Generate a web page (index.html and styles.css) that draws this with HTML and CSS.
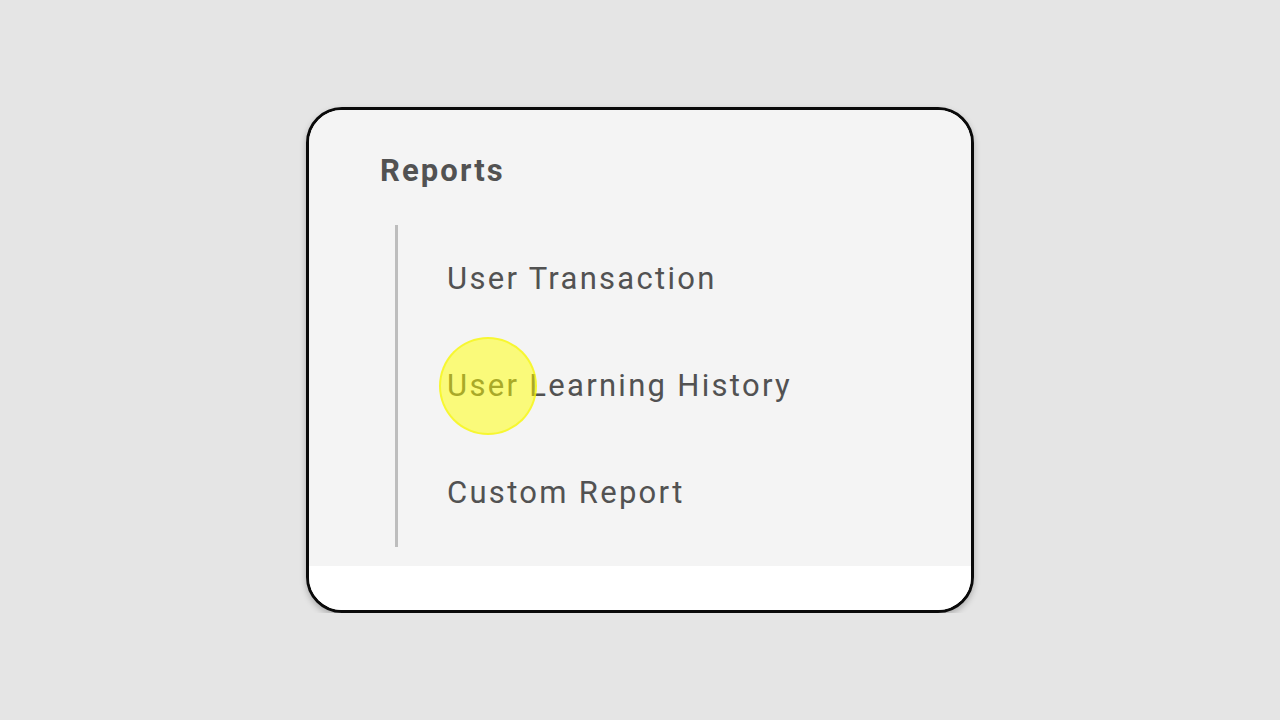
FILE: index.html
```html
<!DOCTYPE html>
<html lang="en">
<head>
    <meta charset="UTF-8">
    <meta name="viewport" content="width=device-width, initial-scale=1.0">
    <title>Reports</title>
    <link rel="stylesheet" href="styles.css">
</head>
<body>

    <div class="card">
        <section class="panel">
            <h2 class="title">Reports</h2>
            <ul class="menu">
                <li><a href="#transaction">User Transaction</a></li>
                <li class="clicked"><a href="#learning">User Learning History</a><span class="spot"></span></li>
                <li><a href="#custom">Custom Report</a></li>
            </ul>
        </section>
        <div class="foot"></div>
    </div>

</body>
</html>
```
FILE: styles.css
```css
body { margin: 0; background: #e5e5e5; font-family: Roboto, "Liberation Sans", sans-serif; }
.card { box-sizing: border-box; width: 668px; height: 506px; margin: 107px auto 0; border: 3px solid #0a0a0a; border-radius: 36px; overflow: hidden; background: white; box-shadow: 0 3px 6px rgba(0, 0, 0, 0.25); display: flex; flex-direction: column; }
.panel { background: #f4f4f4; height: 456px; padding: 37px 0 0 71px; box-sizing: border-box; }
.title { margin: 0; font-size: 31px; font-weight: bold; color: #525252; letter-spacing: 2.1px; line-height: 48px; }
.menu { list-style: none; margin: 30px 0 0 15px; padding: 33px 0 0 0; border-left: 3px solid #bdbdbd; height: 322px; box-sizing: border-box; display: flex; flex-direction: column; gap: 66px; }
.menu li { position: relative; padding-left: 49px; font-size: 31px; line-height: 41px; }
.menu a { text-decoration: none; color: #525252; letter-spacing: 2.3px; }
.spot { position: absolute; left: 41px; top: -28px; width: 98px; height: 98px; border-radius: 50%; background: rgba(255, 255, 0, 0.5); border: 2px solid rgba(245, 245, 0, 0.6); box-sizing: border-box; }
.foot { flex: 1; background: white; }
```
